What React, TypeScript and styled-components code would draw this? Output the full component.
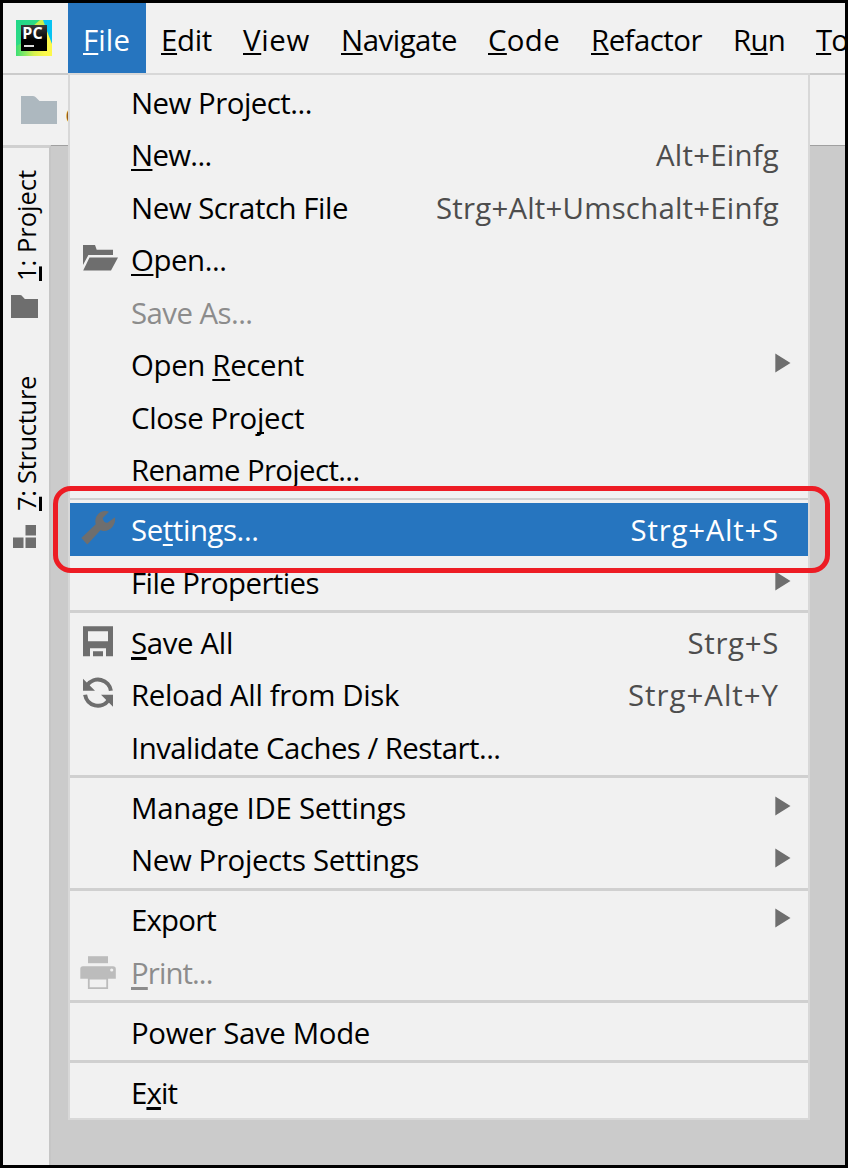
import React, { useLayoutEffect, useRef, useState } from "react";
import styled, { createGlobalStyle } from "styled-components";

const Global = createGlobalStyle`
  * { box-sizing: border-box; }
  body { margin: 0; background: #000; }
`;

const Window = styled.div`
  position: relative;
  display: flex;
  flex-direction: column;
  width: 848px;
  height: 1168px;
  border: 3px solid #000;
  background: #cbcbcb;
  overflow: hidden;
  font-family: "Open Sans", "Noto Sans", sans-serif;
  font-size: 29.4px;
  color: #000;
`;

const MenuBar = styled.nav`
  display: flex;
  flex: none;
  height: 72px;
  background: #f1f1f1;
  border-bottom: 2px solid #cbcbcb;
`;

const LogoCell = styled.div`
  flex: none;
  width: 65px;
  padding: 17px 0 0 13px;
`;

const Mnemonic = styled.span<{ $thick?: boolean }>`
  text-decoration: underline;
  text-decoration-thickness: ${(p) => (p.$thick ? 3 : 2)}px;
  text-underline-offset: 3px;
  text-decoration-skip-ink: none;
`;

const MenuTitle = styled.div<{ $active?: boolean }>`
  flex: none;
  height: 70px;
  padding: 2px 16px 0 15px;
  line-height: 70px;
  color: ${(p) => (p.$active ? "#fff" : "#000")};
  background: ${(p) => (p.$active ? "#2675bf" : "transparent")};
  ${Mnemonic} { text-underline-offset: 2px; }
`;

const Toolbar = styled.div`
  display: flex;
  flex: none;
  height: 70px;
  padding: 21px 0 0 18px;
  background: #f1f1f1;
  color: #8a5a20;
`;

const Crumb = styled.span`
  margin-left: 8px;
  line-height: 34px;
`;

const Body = styled.div`
  display: flex;
  flex: 1;
  min-height: 0;
`;

const ToolStrip = styled.aside`
  display: flex;
  flex-direction: column;
  width: 48px;
  background: #f1f1f1;
  border-top: 3px solid #d0d0d0;
  border-right: 2px solid #c6c6c6;
  font-size: 25.5px;
`;

const Editor = styled.main`
  flex: 1;
  border-top: 1px solid #a0a0a0;
  background: #cbcbcb;
`;

const StripButton = styled.div<{ $top: number; $gap: number; $left: number }>`
  display: flex;
  flex-direction: column;
  align-items: flex-start;
  gap: ${(p) => p.$gap}px;
  margin-top: ${(p) => p.$top}px;
  svg { margin-left: ${(p) => p.$left}px; display: block; }
`;

const Popup = styled.div`
  position: absolute;
  left: 65px;
  top: 70px;
  width: 742px;
  height: 1047px;
  padding-top: 0.5px;
  border: 2px solid #d8d8d8;
  background: #f1f1f1;
`;

const Row = styled.div<{ $tone?: string }>`
  display: grid;
  grid-template-columns: 52px 1fr auto;
  align-items: center;
  height: 52.5px;
  padding: 2px 29px 0 9px;
  line-height: 50.5px;
  background: ${(p) => (p.$tone === "selected" ? "#2675bf" : "transparent")};
  color: ${(p) => (p.$tone === "selected" ? "#fff" : p.$tone === "disabled" ? "#8c8c8c" : "#000")};
`;

const IconCell = styled.span`
  display: flex;
  margin-top: -2.5px;
  svg { display: block; }
`;

const Shortcut = styled.span<{ $selected: boolean }>`
  color: ${(p) => (p.$selected ? "#fff" : "#4d4d4d")};
`;

const ArrowCell = styled.span`
  display: flex;
  margin: -4px -12px 0 0;
`;

const Separator = styled.div<{ $thin?: boolean }>`
  height: 7.5px;
  padding-top: ${(p) => (p.$thin ? 2.5 : 2)}px;
  &::before {
    content: "";
    display: block;
    height: ${(p) => (p.$thin ? 2 : 3)}px;
    background: #d0d0d0;
  }
`;

const Highlight = styled.div`
  position: absolute;
  left: 50px;
  top: 483px;
  width: 777px;
  height: 87px;
  border: 5px solid #ed1c24;
  border-radius: 18px;
`;

const StripLabel = styled.div`
  writing-mode: vertical-rl;
  transform: rotate(180deg);
  line-height: 36px;
  margin-left: 5px;
  ${Mnemonic} { text-underline-offset: 0; text-decoration-thickness: 2.5px; }
`;

const TextRun = styled.span`
  display: inline-block;
  white-space: pre;
`;

/* Text whose tracking is set so that it takes up the given length. An "_" marks the mnemonic letter. */
function Label({ text, length, thick }: { text: string; length: number; thick?: boolean }) {
  const ref = useRef<HTMLSpanElement>(null);
  const [spacing, setSpacing] = useState(0);
  const plain = text.replace("_", "");
  useLayoutEffect(() => {
    const box = ref.current!.getBoundingClientRect();
    const vertical = getComputedStyle(ref.current!).writingMode !== "horizontal-tb";
    setSpacing((length - (vertical ? box.height : box.width)) / plain.length);
  }, []);
  const at = text.indexOf("_");
  return (
    <TextRun ref={ref} style={{ letterSpacing: spacing }}>
      {at < 0 ? text : (
        <>
          {text.slice(0, at)}
          <Mnemonic $thick={thick}>{text[at + 1]}</Mnemonic>
          {text.slice(at + 2)}
        </>
      )}
    </TextRun>
  );
}

const Logo = () => (
  <svg width="36" height="36" viewBox="0 0 36 36" display="block">
    <defs>
      <linearGradient id="green" x1="0" y1="0" x2="1" y2="1">
        <stop offset="0" stopColor="#21d789" />
        <stop offset="0.6" stopColor="#35dd83" />
        <stop offset="1" stopColor="#c5f052" />
      </linearGradient>
      <linearGradient id="yellow" x1="0" y1="0" x2="1" y2="0">
        <stop offset="0" stopColor="#3bdf75" />
        <stop offset="0.5" stopColor="#d8f24f" />
        <stop offset="0.8" stopColor="#fcf84a" />
      </linearGradient>
      <linearGradient id="face" x1="0" y1="0" x2="0" y2="1">
        <stop offset="0" stopColor="#3a3a3a" />
        <stop offset="0.6" stopColor="#000" />
      </linearGradient>
    </defs>
    <rect width="36" height="36" fill="url(#green)" />
    <path d="M26 0H36V26L29 9Z" fill="#07c3f2" />
    <path d="M0 26L12 20L29 6L36 24V36H0Z" fill="url(#yellow)" />
    <path d="M17 6L24 0H27L29.5 7Z" fill="#c6ee4c" />
    <rect x="5" y="5" width="26" height="26" fill="url(#face)" />
    <text x="6.2" y="19" fontFamily="Open Sans, sans-serif" fontWeight="700" fontSize="16" letterSpacing="0.2" fill="#fff">PC</text>
    <rect x="8" y="25" width="10" height="2" fill="#ddd" />
  </svg>
);

const FolderIcon = ({ w, h, color }: { w: number; h: number; color: string }) => (
  <svg width={w} height={h} viewBox="0 0 36 28" preserveAspectRatio="none">
    <path d="M0 0H12Q14 0 15 1.5L18.5 5H36V28H0Z" fill={color} />
  </svg>
);

const BlocksIcon = () => (
  <svg width="23" height="23" viewBox="0 0 23 23" fill="#6e6e6e">
    <rect x="12.5" width="10.5" height="10.5" />
    <rect y="12.5" width="10.5" height="10.5" />
    <rect x="12.5" y="12.5" width="10.5" height="10.5" />
  </svg>
);

const icons: Record<string, React.ReactNode> = {
  open: <path d="M4 6H16L17.7 10.8H34V16H9.4L4 26ZM10.5 18.4H39L32 31.4H4.2Z" />,
  wrench: (
    <path d="M2.3 29L16.7 15.2C15 8 20 2 26 2C28 2 29 2.2 30 2.7L23.7 9C24 12 26 14 28.5 13.7L36 8.2C37.3 15 32 22 25 22C24 22 22.5 21.7 21.7 21L8.3 35.5Z" />
  ),
  save: (
    <path fillRule="evenodd" d="M4 4.2H34V34.2H27V26.2H11V34.2H4ZM9 9.2V19.2H29V9.2ZM14 29.2H24V34.2H14Z" />
  ),
  reload: (
    <>
      <path d="M4 4.7V16.7H16ZM34 32.7V20.7H22Z" />
      <path d="M31.9 16.7A13 13 0 0 0 8.5 11M6.1 20.7A13 13 0 0 0 29.5 26.4" fill="none" stroke="#6e6e6e" strokeWidth="4" />
    </>
  ),
  print: (
    <g fill="#bcbcbc">
      <rect x="9" y="4.2" width="20" height="7" />
      <path d="M1.3 16.7Q1.3 14.2 3.8 14.2H34Q36.8 14.2 36.8 16.7V26.7H1.3Z" />
      <circle cx="32.7" cy="18" r="1.6" fill="#f1f1f1" />
      <path d="M9.8 26.7V36.2H28.2V26.7Z" fill="#f1f1f1" stroke="#bcbcbc" strokeWidth="1.8" />
    </g>
  ),
};

const Arrow = () => (
  <svg width="16" height="20" viewBox="0 0 16 20">
    <path d="M0.3 0.5L15.5 10L0.3 19.5Z" fill="#6e6e6e" />
  </svg>
);

type Item = {
  text: string;
  length: number;
  icon?: string;
  keys?: string;
  keysLength?: number;
  arrow?: boolean;
  tone?: string;
  thick?: boolean;
};

const groups: Item[][] = [
  [
    { text: "New Project...", length: 181 },
    { text: "_New...", length: 80.5, keys: "Alt+Einfg", keysLength: 123 },
    { text: "New Scratch File", length: 217, keys: "Strg+Alt+Umschalt+Einfg", keysLength: 343 },
    { text: "_Open...", length: 95.5, icon: "open" },
    { text: "Save As...", length: 121.5, tone: "disabled" },
    { text: "Open _Recent", length: 173, arrow: true },
    { text: "Close Pro_ject", length: 173 },
    { text: "Rename Project...", length: 228.5 },
  ],
  [
    { text: "Se_ttings...", length: 127.5, icon: "wrench", keys: "Strg+Alt+S", keysLength: 148.5, tone: "selected" },
    { text: "File Properties", length: 188, arrow: true },
  ],
  [
    { text: "_Save All", length: 102, icon: "save", keys: "Strg+S", keysLength: 91.5, thick: true },
    { text: "Reload All from Disk", length: 268, icon: "reload", keys: "Strg+Alt+Y", keysLength: 151 },
    { text: "Invalidate Caches / Restart...", length: 369.5 },
  ],
  [
    { text: "Manage IDE Settings", length: 275, arrow: true },
    { text: "New Projects Settings", length: 288, arrow: true },
  ],
  [
    { text: "Export", length: 85, arrow: true },
    { text: "_Print...", length: 81.5, icon: "print", tone: "disabled", thick: true },
  ],
  [{ text: "Power Save Mode", length: 239 }],
  [{ text: "E_xit", length: 46, thick: true }],
];

const titles: [string, number][] = [
  ["_File", 47],
  ["_Edit", 51],
  ["_View", 67],
  ["_Navigate", 116],
  ["_Code", 72],
  ["_Refactor", 111],
  ["R_un", 52],
  ["_Tools", 68],
];

function MenuRow({ item }: { item: Item }) {
  return (
    <Row $tone={item.tone}>
      <IconCell>
        {item.icon && (
          <svg width="40" height="40" viewBox="0 0 40 40" fill="#6e6e6e">{icons[item.icon]}</svg>
        )}
      </IconCell>
      <span><Label text={item.text} length={item.length} thick={item.thick} /></span>
      {item.keys && (
        <Shortcut $selected={item.tone === "selected"}>
          <Label text={item.keys} length={item.keysLength!} />
        </Shortcut>
      )}
      {item.arrow && <ArrowCell><Arrow /></ArrowCell>}
    </Row>
  );
}

export default function App() {
  return (
    <>
      <Global />
      <Window>
        <MenuBar>
          <LogoCell><Logo /></LogoCell>
          {titles.map(([text, length], i) => (
            <MenuTitle key={text} $active={i === 0}><Label text={text} length={length} /></MenuTitle>
          ))}
        </MenuBar>
        <Toolbar>
          <FolderIcon w={36} h={28} color="#adb8bf" />
          <Crumb>c</Crumb>
        </Toolbar>
        <Body>
          <ToolStrip>
            <StripButton $top={22} $gap={14} $left={8}>
              <StripLabel><Label text="_1: Project" length={111} /></StripLabel>
              <FolderIcon w={27} h={23} color="#6e6e6e" />
            </StripButton>
            <StripButton $top={58} $gap={14} $left={10}>
              <StripLabel><Label text="_7: Structure" length={135} /></StripLabel>
              <BlocksIcon />
            </StripButton>
          </ToolStrip>
          <Editor />
        </Body>
        <Popup>
          {groups.map((items, g) => (
            <React.Fragment key={g}>
              {g > 0 && <Separator $thin={g === 1} />}
              {items.map((item) => <MenuRow key={item.text} item={item} />)}
            </React.Fragment>
          ))}
        </Popup>
        <Highlight />
      </Window>
    </>
  );
}
